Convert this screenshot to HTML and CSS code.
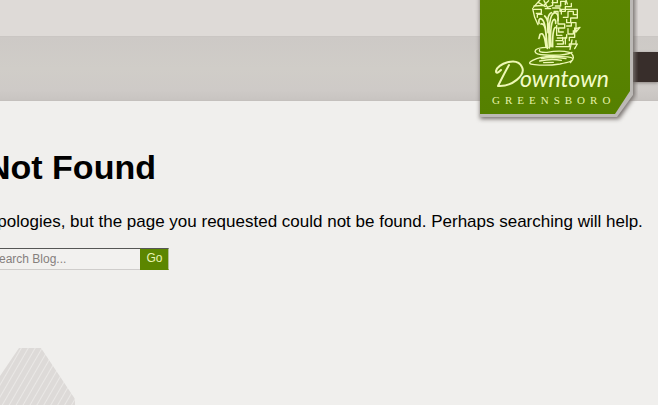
FILE: index.html
```html
<!DOCTYPE html>
<html lang="en">
<head>
<meta charset="utf-8">
<title>Not Found</title>
<link rel="stylesheet" href="styles.css">
</head>
<body>
<header class="header">
  <div class="topbar"></div>
  <div class="banner"><div class="nav"></div></div>
  <a class="logo" href="#" aria-label="Downtown Greensboro">
    <svg width="164" height="126" viewBox="0 0 164 126">
      <defs>
        <linearGradient id="green" x1="0" y1="0" x2="0" y2="1">
          <stop offset="0" stop-color="#5c8600"/>
          <stop offset="1" stop-color="#558000"/>
        </linearGradient>
      </defs>
      <path class="logo-shadow" d="M6 -10H161V96L145 119H6Z"/>
      <path class="logo-edge" d="M6 -10H159V95L143 117H6Z"/>
      <path fill="url(#green)" d="M6 -10H156V91L141 114H6Z"/>
      <g class="emblem" transform="translate(-4 0) scale(.33333)">
        <path d="M190 22L210 0M192 18L222 16L236 2M206 8L226 20M188 26L194 52L204 74M190 28H214V40H199M202 52V43H216M222 2L232 22L248 16V0M246 8H262V0M256 18H272V4H286V14M248 24H270V34H286V20H304V10M288 0L292 12M226 26H242M252 34H264V46M274 42V28H322V44H310V34H294V52H280M322 44V54H302V68H290V58M264 56V72H284V84H266V96H280M260 76V106H276M290 78H304V68H318V86L330 82L318 96V76M294 86V102H310V92M314 84V112H298V122M262 114H290V104M258 122H278V112M286 112V132M262 132H280V124M258 140H298V132H318V122M300 148L306 120M322 132L314 146"/>
        <path class="jet" d="M232 145C228 94 226 59 212 56Q205 56 207 70M229 126C228 88 225 70 213 72M228 140C224 109 219 96 210 103L207 115M238 144C235 86 239 42 254 38Q267 39 264 62M243 140C239 91 245 59 253 58Q258 60 257 70M248 140C247 96 252 76 261 84M234 98C232 62 232 44 244 38M224 48Q232 54 235 76"/>
        <path class="water" d="M234 142Q196 142 195 154Q196 164 226 165Q286 168 306 157M209 149Q204 158 231 157Q271 150 298 157M194 194Q167 192 188 181Q211 169 244 169Q302 168 308 175Q314 184 270 192Q230 198 194 194M214 176Q248 170 288 176M209 183Q244 175 274 181M221 188L250 187M302 158Q319 172 301 188"/>
      </g>
      <path class="swash" d="M35 65C31 72 27 80 24 86C38 87 52 75 48 67C43 56 23 64 22 71Q22 75 27 70"/>
      <text class="script" x="46" y="87">owntown</text>
      <text class="city" x="18" y="104">GREENSBORO</text>
    </svg>
  </a>
</header>
<main class="content">
  <h1>Not Found</h1>
  <p>Apologies, but the page you requested could not be found. Perhaps searching will help.</p>
  <form class="search">
    <input type="text" aria-label="Search Blog" placeholder="Search Blog...">
    <button type="submit">Go</button>
  </form>
</main>
<footer class="footer">
  <svg width="100" height="57" viewBox="0 0 100 57">
    <defs>
      <pattern id="stripes" width="6" height="6" patternUnits="userSpaceOnUse" patternTransform="rotate(30)">
        <rect width="6" height="6" fill="#dddad8"/>
        <rect width="1" height="6" fill="#eae8e6"/>
      </pattern>
    </defs>
    <path fill="url(#stripes)" d="M19 0H41L75 51V57H0V28Z"/>
  </svg>
</footer>
</body>
</html>
```
FILE: styles.css
```css
* {
  box-sizing: border-box;
}

body {
  margin: 0;
  overflow: hidden;
  background: #f0efed;
  color: #000;
  font-family: "Liberation Sans", Arial, sans-serif;
}

.header {
  position: relative;
}

.topbar {
  height: 36px;
  background: #dedad7;
}

.banner {
  display: flex;
  justify-content: flex-end;
  height: 65px;
  padding-top: 15px;
  border-top: 1px solid #cac6c3;
  border-bottom: 1px solid #c4c0bd;
  background: linear-gradient(#cdc9c6, #d0cdc8 50%, #cecac7 85%, #c8c4c1);
}

.nav {
  width: 40px;
  height: 30px;
  background: #382e2b;
  box-shadow: 0 1px 3px #8a8480;
}

.logo {
  position: absolute;
  top: 0;
  right: 20px;
}

.logo svg,
.footer svg {
  display: block;
}

.logo-shadow {
  fill: #77716e;
  filter: blur(2px);
}

.logo-edge {
  fill: #bcb9b6;
}

.emblem,
.swash {
  fill: none;
  stroke: #eef8b4;
  stroke-linecap: round;
  stroke-linejoin: round;
}

.emblem {
  stroke-width: 4;
}

.jet {
  stroke-width: 5;
}

.water {
  stroke-width: 4;
}

.swash {
  stroke-width: 2;
}

.script {
  fill: #f3fbc8;
  font: italic 23px Lato, sans-serif;
}

.city {
  fill: #e6f2a8;
  font: 11px "Liberation Serif", serif;
  letter-spacing: 5px;
}

.content {
  margin-left: -14px;
  padding-top: 46px;
}

h1 {
  margin: 0 0 24px;
  font-size: 34px;
  line-height: 40px;
}

p {
  margin: 0 0 16px;
  font-size: 17px;
  line-height: 21px;
  white-space: nowrap;
}

.search {
  display: flex;
  height: 22px;
}

.search input {
  width: 154px;
  padding: 0 4px;
  border: 1px solid #cfcdcb;
  border-top-color: #555;
  border-right: 0;
  background: #f2f1ef;
  font: 12px "Liberation Sans", Arial, sans-serif;
}

.search input::placeholder {
  color: #85807d;
  opacity: 1;
}

.search button {
  width: 29px;
  padding: 0 0 2px;
  border: 1px solid #5c8600;
  border-top-color: #555;
  border-right-color: #b5bf9c;
  background: #5c8600;
  color: #e9f4b4;
  font: 12px "Liberation Sans", Arial, sans-serif;
}

.footer {
  padding-top: 78px;
}
```
